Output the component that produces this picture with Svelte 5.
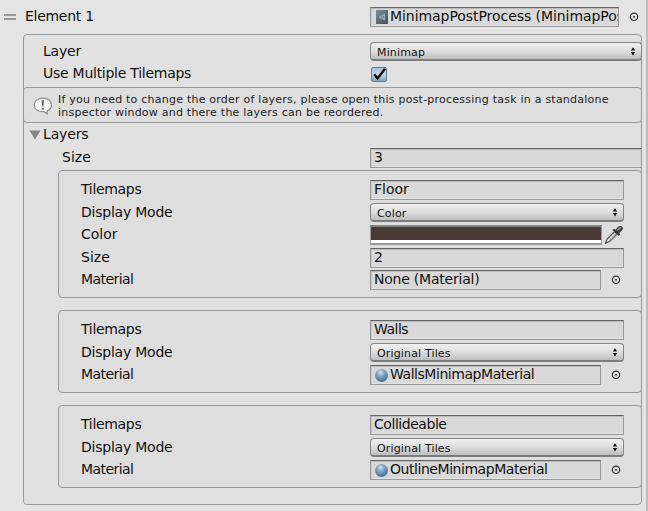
<script>
  const groups = [
    {
      gap: 2,
      rows: [
        { label: 'Tilemaps', kind: 'text', value: 'Floor', gap: 0 },
        { label: 'Display Mode', kind: 'popup', value: 'Color', gap: 3 },
        { label: 'Color', kind: 'color', value: '#493938', gap: 3 },
        { label: 'Size', kind: 'text', value: '2', gap: 3 },
        { label: 'Material', kind: 'object', value: 'None (Material)', gap: 2 }
      ]
    },
    {
      gap: 12,
      rows: [
        { label: 'Tilemaps', kind: 'text', value: 'Walls', gap: 0 },
        { label: 'Display Mode', kind: 'popup', value: 'Original Tiles', gap: 3 },
        { label: 'Material', kind: 'object', icon: true, value: 'WallsMinimapMaterial', gap: 3 }
      ]
    },
    {
      gap: 12,
      rows: [
        { label: 'Tilemaps', kind: 'text', value: 'Collideable', gap: 0 },
        { label: 'Display Mode', kind: 'popup', value: 'Original Tiles', gap: 3 },
        { label: 'Material', kind: 'object', icon: true, value: 'OutlineMinimapMaterial', gap: 3 }
      ]
    }
  ];

  // Letter spacing in px, per string
  const tracking = {
    'Element 1': -0.28,
    Layer: -0.2,
    Layers: -0.15,
    'Use Multiple Tilemaps': -0.26,
    Tilemaps: -0.31,
    'Display Mode': -0.23,
    Material: -0.56,
    Walls: -0.5,
    'None (Material)': -0.22,
    Collideable: -0.45,
    WallsMinimapMaterial: -0.45,
    OutlineMinimapMaterial: -0.45
  };
</script>

{#snippet text(value)}
  <span style:letter-spacing="{tracking[value] ?? 0}px">{value}</span>
{/snippet}

{#snippet picker()}
  <svg class="picker" width="10" height="10" viewBox="0 0 10 10">
    <circle cx="5" cy="4.8" r="3.7" fill="none" stroke="#333" stroke-width="1.2" />
    <rect x="4.2" y="4" width="1.6" height="1.6" fill="#222" />
  </svg>
{/snippet}

{#snippet popup(value)}
  <div class="popup">
    <span>{value}</span>
    <svg width="6" height="9" viewBox="0 0 6 9">
      <path d="M0.8 3.6 L3 0.3 L5.2 3.6 Z M0.8 5 L3 8.5 L5.2 5 Z" fill="#111" />
    </svg>
  </div>
{/snippet}

<main>
  <section class="inspector">
    <header>
      <i class="handle"></i>
      <div class="title">{@render text('Element 1')}</div>
      <div class="field object head">
        <svg class="asset" width="12" height="14" viewBox="0 0 12 14">
          <defs>
            <linearGradient id="asset" x1="0" y1="0" x2="1" y2="1">
              <stop offset="0" stop-color="#78909a" />
              <stop offset="1" stop-color="#3f515c" />
            </linearGradient>
          </defs>
          <rect width="12" height="14" fill="url(#asset)" />
          <path d="M3 7 L8.5 4 V10 Z M3 7 H6.5 M6.5 7 L8.5 4 M6.5 7 L8.5 10" fill="none" stroke="#a9bdc4" stroke-width="0.8" />
        </svg>
        <span class="clip">MinimapPostProcess (MinimapPos</span>
      </div>
      {@render picker()}
    </header>

    <div class="box outer">
      <div class="row first">
        <label>{@render text('Layer')}</label>
        <div class="control">{@render popup('Minimap')}</div>
      </div>
      <div class="row second">
        <label>{@render text('Use Multiple Tilemaps')}</label>
        <div class="check">
          <svg width="16" height="15" viewBox="0 0 16 15">
            <path d="M3.2 7.2 L6.6 11.5 L14 1.8" fill="none" stroke="#080808" stroke-width="2.3" />
          </svg>
        </div>
      </div>

      <div class="box help">
        <svg width="20" height="18" viewBox="0 0 20 18">
          <path d="M10 1.2 C15 1.2 18.4 4 18.4 7.9 C18.4 10.7 16.8 12.8 14.1 13.9 L14.2 16.7 L11 14.7 C5.2 15 1.3 12.2 1.3 8 C1.3 4 5 1.2 10 1.2 Z" fill="#f8f8f8" stroke="#929292" stroke-width="1.3" />
          <path d="M8.5 3.2 H11 L10.4 9.4 H9.1 Z M8.7 10.7 H10.8 V12.6 H8.7 Z" fill="#626262" />
        </svg>
        <p>If you need to change the order of layers, please open this post-processing task in a standalone<br />inspector window and there the layers can be reordered.</p>
      </div>

      <div class="foldout">
        <svg width="12" height="10" viewBox="0 0 12 10"><path d="M0.5 0.5 H11.5 L6 9.5 Z" fill="#858585" /></svg>
        <div class="caption">{@render text('Layers')}</div>
      </div>
      <div class="row size">
        <label>{@render text('Size')}</label>
        <div class="control"><div class="field">{@render text('3')}</div></div>
      </div>

      {#each groups as group}
        <div class="box group" style:margin-top="{group.gap}px">
          {#each group.rows as row}
            <div class="row" class:short={row.kind === 'popup'} style:margin-top="{row.gap}px">
              <label>{@render text(row.label)}</label>
              <div class="control">
                {#if row.kind === 'text'}
                  <div class="field">{@render text(row.value)}</div>
                {:else if row.kind === 'popup'}
                  {@render popup(row.value)}
                {:else if row.kind === 'color'}
                  <div class="swatch" style:background-color={row.value}></div>
                  <svg class="dropper" width="20" height="20" viewBox="0 0 20 20">
                    <path d="M10.6 6.5 L13.2 9 L5.5 16.6 L2.5 17.8 L1.8 18.5 L1.5 18.2 L3 14.4 Z" fill="#eee" stroke="#444" stroke-width="1.1" />
                    <path d="M5 16 L12.2 8.8" stroke="#999" stroke-width="1.2" />
                    <path d="M8.4 5 L10 3.8 L11.6 4.8 L13.8 2 C14.9 0.7 17.2 0.7 18.3 1.7 C19.2 2.9 18.9 4.6 17.8 5.6 L15.4 7.9 L16.2 9.6 L14.9 11 Z" fill="#3b3b3b" />
                    <path d="M13.4 5.2 L16.6 2.4" stroke="#aaa" stroke-width="1.4" />
                  </svg>
                {:else}
                  <div class="field object">
                    {#if row.icon}<i class="ball"></i>{/if}
                    {@render text(row.value)}
                  </div>
                  {@render picker()}
                {/if}
              </div>
            </div>
          {/each}
        </div>
      {/each}
    </div>
  </section>
  <div class="edge"></div>
</main>

<style>
  :global(body) { background: #e4e4e4; }
  main {
    display: flex;
    width: 648px;
    height: 511px;
    overflow: hidden;
    box-sizing: border-box;
    background: #e4e4e4;
    color: #111;
    font: 14px/20px "DejaVu Sans", sans-serif;
    white-space: nowrap;
  }
  main * { box-sizing: border-box; }
  svg { display: block; flex: none; }
  .inspector { width: 646px; flex: none; }
  .edge { width: 2px; background: #bdbdbd; }
  header { display: flex; height: 34px; padding: 7px 0 0 4px; }
  .handle {
    width: 12px;
    height: 6px;
    margin-top: 7px;
    border: solid #999;
    border-width: 2px 0;
  }
  .title { width: 345px; margin-left: 9px; line-height: 18px; }
  .picker { margin: 5px 0 0 10px; }
  .box { border: 1px solid #999; border-radius: 4px; }
  .outer {
    width: 619px;
    height: 471px;
    margin-left: 23px;
    padding-top: 7px;
    background: #e1e1e1;
  }
  .row { display: flex; height: 20px; }
  .row.short { height: 19px; }
  label { flex: none; line-height: 19px; }
  .control { display: flex; flex: 1; }
  .first { height: 19px; padding-left: 19px; }
  .first label, .second label { width: 327px; }
  .second { height: 16px; margin-top: 5px; padding-left: 19px; }
  .second label { line-height: 15px; }
  .first .control, .size .control { margin-right: -1px; }
  .check {
    width: 16px;
    height: 15px;
    margin: 1px 0 0 1px;
    border: 1px solid #717983;
    border-radius: 2px;
    background: linear-gradient(#a8bfda, #c0d8ef 50%, #7fa2c6);
  }
  .check svg { margin: -1px; }
  .help {
    display: flex;
    height: 36px;
    margin: 5px -1px 0;
    padding: 9px 0 0 9px;
    background: #dedede;
  }
  .help p {
    margin: -4px 0 0 5px;
    font-size: 11px;
    line-height: 13px;
    letter-spacing: 0.23px;
    color: #222;
  }
  .foldout { display: flex; height: 20px; margin-top: 1px; padding-left: 5px; }
  .foldout svg { margin-top: 6px; }
  .caption { margin-left: 2px; }
  .size { margin-top: 4px; padding-left: 38px; }
  .size label { width: 308px; }
  .group {
    margin-right: -1px;
    margin-left: 34px;
    padding: 9px 17px 7px 22px;
    background: #dedede;
  }
  .group label { width: 289px; }
  .field {
    flex: 1;
    height: 20px;
    padding-left: 3px;
    overflow: hidden;
    line-height: 16px;
    border: 1px solid #999;
    border-top-color: #666;
    background: #d9d9d9;
    box-shadow: inset 0 1px #bbb, inset 1px 0 #cacaca, inset 0 -1px #e4e4e4;
  }
  .object { display: flex; flex: none; width: 231px; }
  .object.head { width: 249px; }
  .asset { margin: 2px 2px 0 2px; }
  .clip { width: 228px; overflow: hidden; letter-spacing: -0.06px; }
  .ball {
    width: 13px;
    height: 13px;
    margin: 3px 2px 0 1px;
    border-radius: 50%;
    background: radial-gradient(circle at 43% 28%, #d5e6f1 0, #89abc7 28%, #507fa5 65%, #365d80 100%);
  }
  .popup {
    display: flex;
    flex: 1;
    height: 19px;
    padding: 0 5px 0 6px;
    justify-content: space-between;
    border: 1px solid #858585;
    border-bottom: 2px solid #7c7c7c;
    border-radius: 4px;
    background: linear-gradient(#f0f0f0, #dedede 50%, #bebebe);
    font-size: 11px;
    line-height: 19px;
    letter-spacing: 0.15px;
  }
  .popup svg { margin-top: 4px; }
  .swatch {
    width: 232px;
    height: 20px;
    border: 2px solid #999;
    border-width: 2px 1px;
    border-top-color: #858585;
    box-shadow: inset 0 -3px #fff;
  }
  .dropper { margin-left: 2px; }
</style>
